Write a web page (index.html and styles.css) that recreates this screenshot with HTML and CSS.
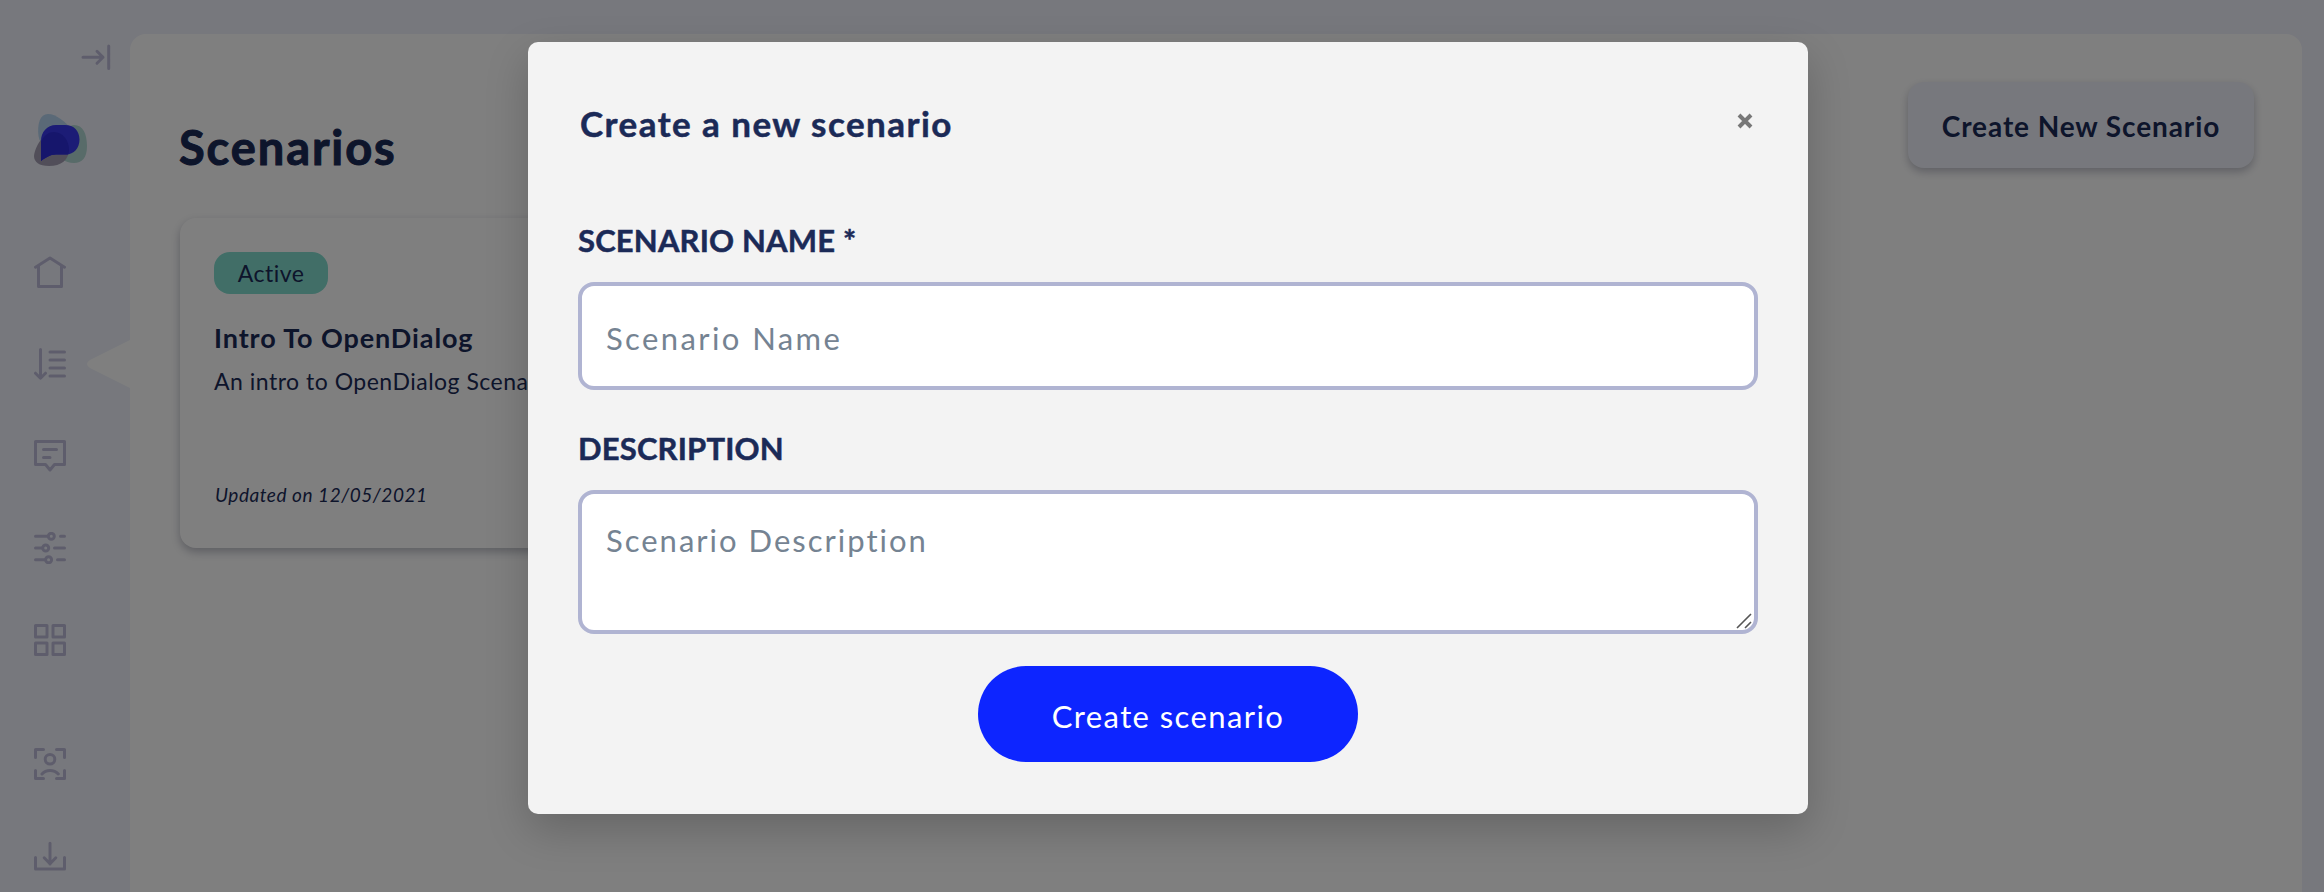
FILE: index.html
```
<!DOCTYPE html>
<html lang="en">
<head>
<meta charset="utf-8">
<title>Scenarios</title>
<link rel="stylesheet" href="styles.css">
</head>
<body>
<div class="app">
  <nav class="sidebar">
    <svg class="collapse" viewBox="0 0 30 28"><path d="M2 14.3H22M16 8.3l6 6-6 6M27.7 3V25.6"/></svg>
    <svg class="logo" viewBox="0 0 54 54">
      <path fill="#b4d2ee" d="M4.500 22C3 10 6 0 14 0C22 0 32 8 37 15C43 24 38 33 28 37C18 40 6 33 4.500 22Z"/>
      <path fill="#b0d6d2" d="M40 11C49 11 53 20 53 32C53 44 48 49 40 49C31 49 24 44 25 36C26 26 32 11 40 11Z"/>
      <path fill="#a29db2" d="M20 18C29 18 35 27 35 35C35 46 27 52 15 52C5 52 0 48 0 42C1 32 10 18 20 18Z"/>
      <path fill="#3838ec" d="M7 47V27C7 18 13 11 22 11H31C40 11 45.500 17 45.500 25.500S40 40.500 32 40.500H22C16 40.500 11 44 7 47Z"/>
      <path fill="#2c2cd8" d="M7 47V28C10 21 15 18 20 18C29 18 35 27 35 35C35 37 35 39 34 40.500H22C16 40.500 11 44 7 47Z"/>
    </svg>
    <div class="menu">
      <svg class="icon" viewBox="0 0 32 32"><path d="M1.500 11.200L16 2l14.500 9.200M4.500 10V30.500H27.500V10"/></svg>
      <svg class="icon" viewBox="0 0 32 32"><path d="M6.500 1.500V30M1.500 25.200l5 5 5-5M16 4H30.500M16 12H30.500M16 20H30.500M16 28H30.500"/></svg>
      <svg class="icon" viewBox="0 0 32 32"><path d="M1.500 1.500H30.500V24.500H20.500L16 30l-4.500-5.500H1.500ZM9.500 9.500H22.500M9.500 17.500H16"/></svg>
      <svg class="icon" viewBox="0 0 32 32"><path d="M1.500 4.300H14M26.500 4.300H30.500M1.500 16H8.500M20.500 16H30.500M1.500 27.700H11.500M23.500 27.700H30.500"/><circle cx="17.300" cy="4.300" r="3"/><circle cx="11.700" cy="16" r="3"/><circle cx="14.600" cy="27.700" r="3"/></svg>
      <svg class="icon" viewBox="0 0 32 32"><path d="M1.500 1.500H13V13H1.500ZM19 1.500H30.500V13H19ZM1.500 19H13V30.500H1.500ZM19 19H30.500V30.500H19Z"/></svg>
    </div>
    <div class="menu menu-bottom">
      <svg class="icon" viewBox="0 0 32 32"><path d="M1.500 9.500V1.500H9.500M22.500 1.500H30.500V9.500M30.500 22.500V30.500H22.500M9.500 30.500H1.500V22.500M8 26C12 21.300 20 21.300 24.300 26"/><circle cx="16" cy="11.300" r="4.800"/></svg>
      <svg class="icon" viewBox="0 0 32 32"><path d="M16 3.200V24M10.200 17.800l5.800 5.900 5.800-5.900M1.500 17.500V29H30.500V17.500"/></svg>
    </div>
    <svg class="notch" viewBox="0 0 43 48"><path d="M43 0L3 20Q-3 24 3 28L43 48Z"/></svg>
  </nav>
  <main class="panel">
    <header class="panel-head">
      <h1 class="page-title">Scenarios</h1>
      <button class="new-btn">Create New Scenario</button>
    </header>
    <article class="card">
      <div class="badge">Active</div>
      <h2 class="card-title">Intro To OpenDialog</h2>
      <p class="card-text">An intro to OpenDialog Scenario</p>
      <p class="card-date">Updated on 12/05/2021</p>
    </article>
  </main>
</div>
<div class="overlay">
  <section class="modal">
    <header class="modal-head">
      <h3 class="modal-title">Create a new scenario</h3>
      <svg class="close" viewBox="0 0 16 16"><path d="M2 2L14 14M14 2L2 14"/></svg>
    </header>
    <div class="label">SCENARIO NAME *</div>
    <div class="field field-name">Scenario Name</div>
    <div class="label">DESCRIPTION</div>
    <div class="field field-desc">Scenario Description
      <svg class="grip" viewBox="0 0 16 16"><path d="M1 15L15 1M9 15l6-6"/></svg>
    </div>
    <button class="submit">Create scenario</button>
  </section>
</div>
</body>
</html>
```
FILE: styles.css
```
* { box-sizing: border-box; margin: 0; padding: 0; }
body {
  height: 892px;
  overflow: hidden;
  font-family: Lato, "Open Sans", sans-serif;
  font-variant-ligatures: none;
  color: #1b2a57;
  background: #eff1fa;
}
button { border: 0; font-family: inherit; color: inherit; }
.app { display: flex; height: 892px; padding: 34px 22px 0 0; }
.sidebar { position: relative; flex: 0 0 130px; display: flex; flex-direction: column; }
.sidebar svg { display: block; }
.collapse, .icon { fill: none; stroke: #bdbbd8; stroke-width: 3; stroke-linecap: round; stroke-linejoin: round; }
.collapse { width: 30px; height: 28px; margin: 9px 0 0 81px; }
.logo { width: 54px; height: 54px; margin: 43px 0 0 34px; }
.menu { display: flex; flex-direction: column; gap: 60px; margin: 88px 0 0 34px; }
.menu-bottom { margin-top: 92px; }
.icon { width: 32px; height: 32px; }
.notch { position: absolute; left: 87px; top: 306px; width: 43px; height: 48px; fill: #fff; }
.panel { flex: 1; height: 858px; padding: 48px 48px 0 50px; background: #fff; border-radius: 16px 16px 0 0; }
.panel-head { display: flex; justify-content: space-between; align-items: flex-start; height: 136px; }
.page-title { font-size: 47px; line-height: 60px; font-weight: 700; letter-spacing: 1.9px; padding-top: 35px; margin-left: -1px; -webkit-text-stroke: 1px; }
.new-btn { width: 346px; height: 86px; padding-top: 1px; border-radius: 16px; background: #eff1fa; font-size: 28px; font-weight: 700; letter-spacing: .9px; box-shadow: 0 4px 8px rgba(60, 62, 90, .32); }
.card { width: 480px; height: 330px; padding: 34px; border-radius: 16px; background: #fff; box-shadow: 0 4px 10px rgba(60, 62, 90, .35); }
.badge { width: 114px; height: 42px; border-radius: 16px; background: #83dccf; font-size: 23px; line-height: 43px; letter-spacing: .5px; text-align: center; }
.card-title { font-size: 27px; line-height: 40px; font-weight: 700; letter-spacing: .9px; margin-top: 24px; }
.card-text { font-size: 23px; line-height: 40px; letter-spacing: .5px; margin-top: 3px; white-space: nowrap; }
.card-date { font-size: 19px; line-height: 30px; letter-spacing: .55px; font-style: italic; margin-top: 79px; padding-left: 1px; }
.overlay { position: absolute; inset: 0; display: flex; justify-content: center; align-items: flex-start; padding: 42px 0 0 12px; background: rgba(0, 0, 0, .5); }
.modal { width: 1280px; height: 772px; padding: 0 50px; border-radius: 10px; background: #f3f3f3; box-shadow: 0 16px 44px rgba(0, 0, 0, .2); display: flex; flex-direction: column; }
.modal-head { display: flex; justify-content: space-between; padding: 60px 5px 0 2px; height: 168px; }
.modal-title { font-size: 35px; line-height: 42px; font-weight: 700; letter-spacing: 1.45px; -webkit-text-stroke: .5px; }
.close { width: 16px; height: 16px; margin-top: 11px; fill: none; stroke: #777; stroke-width: 4; }
.label { font-size: 31px; line-height: 40px; height: 72px; font-weight: 700; letter-spacing: .17px; padding-top: 10px; -webkit-text-stroke: .5px; }
.field { position: relative; border: 4px solid #b0b4d2; border-radius: 16px; background: #fff; color: #758392; font-size: 31px; line-height: 40px; padding-left: 24px; }
.field-name { height: 108px; padding-top: 32px; margin-bottom: 28px; letter-spacing: 2.4px; }
.field-desc { height: 144px; padding-top: 26px; letter-spacing: 2px; }
.grip { position: absolute; right: 2px; bottom: 1px; width: 16px; height: 16px; fill: none; stroke: #555; stroke-width: 1.6; }
.submit { align-self: center; width: 380px; height: 96px; margin-top: 32px; padding-top: 4px; border-radius: 48px; background: #0d25ff; color: #fff; font-size: 31px; letter-spacing: 1.4px; }
```
